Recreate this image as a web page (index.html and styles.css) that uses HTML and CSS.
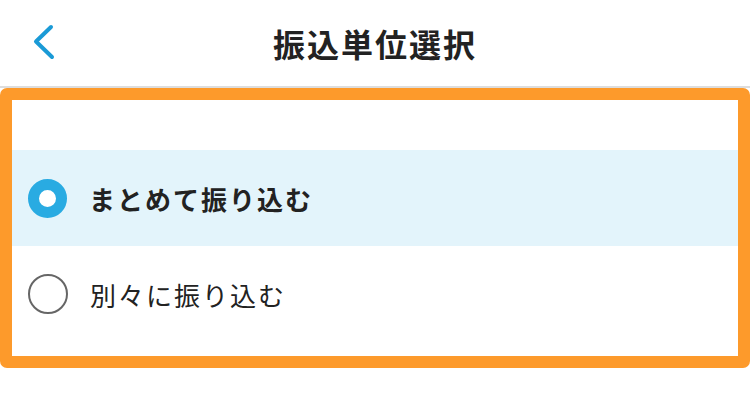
FILE: index.html
```html
<!DOCTYPE html>
<html lang="ja">
<head>
    <meta charset="UTF-8">
    <meta name="viewport" content="width=device-width, initial-scale=1.0">
    <title>振込単位選択</title>
    <link rel="stylesheet" href="styles.css">
</head>
<body>
    <header class="header">
        <a class="back" href="#">
            <svg width="24" height="36" viewBox="0 0 24 36">
                <path d="M19 3 L4 17.5 L20 33" fill="none" stroke="#1a9ad6" stroke-width="4" stroke-linecap="round" stroke-linejoin="round"/>
            </svg>
        </a>
        <h1 class="title">振込単位選択</h1>
    </header>

    <div class="frame">
        <ul class="options">
            <li class="option selected">
                <span class="radio"></span>
                <span class="label">まとめて振り込む</span>
            </li>
            <li class="option">
                <span class="radio"></span>
                <span class="label">別々に振り込む</span>
            </li>
        </ul>
    </div>
</body>
</html>
```

FILE: styles.css
```css
body {
    margin: 0;
    font-family: "Noto Sans CJK JP", "Noto Sans", sans-serif;
    color: #222;
    background-color: #fff;
    width: 750px;
}
.header {
    height: 86px;
    border-bottom: 2px solid #ddd;
    display: flex;
    align-items: center;
    justify-content: center;
    position: relative;
}
.back {
    position: absolute;
    left: 32px;
    top: 24px;
    display: block;
}
.title {
    margin: 0;
    font-size: 32px;
    font-weight: bold;
    letter-spacing: 2px;
    color: #222;
    line-height: 1;
    padding-left: 0;
}
.frame {
    border: 12px solid #fd9a2b;
    border-radius: 7px;
    height: 256px;
    box-sizing: content-box;
}
.options {
    list-style: none;
    margin: 0;
    padding: 50px 0 0;
}
.option {
    height: 96px;
    display: flex;
    align-items: center;
    padding-left: 16px;
}
.option.selected {
    background-color: #e3f4fb;
}
.radio {
    width: 36px;
    height: 36px;
    border: 2px solid #666;
    border-radius: 50%;
    box-sizing: content-box;
    flex-shrink: 0;
}
.selected .radio {
    width: 17px;
    height: 17px;
    border: 11px solid #29abe2;
    background-color: #fff;
}
.label {
    margin-left: 22px;
    font-size: 26px;
    letter-spacing: 2px;
    color: #222;
}
.selected .label {
    font-weight: bold;
}
```
